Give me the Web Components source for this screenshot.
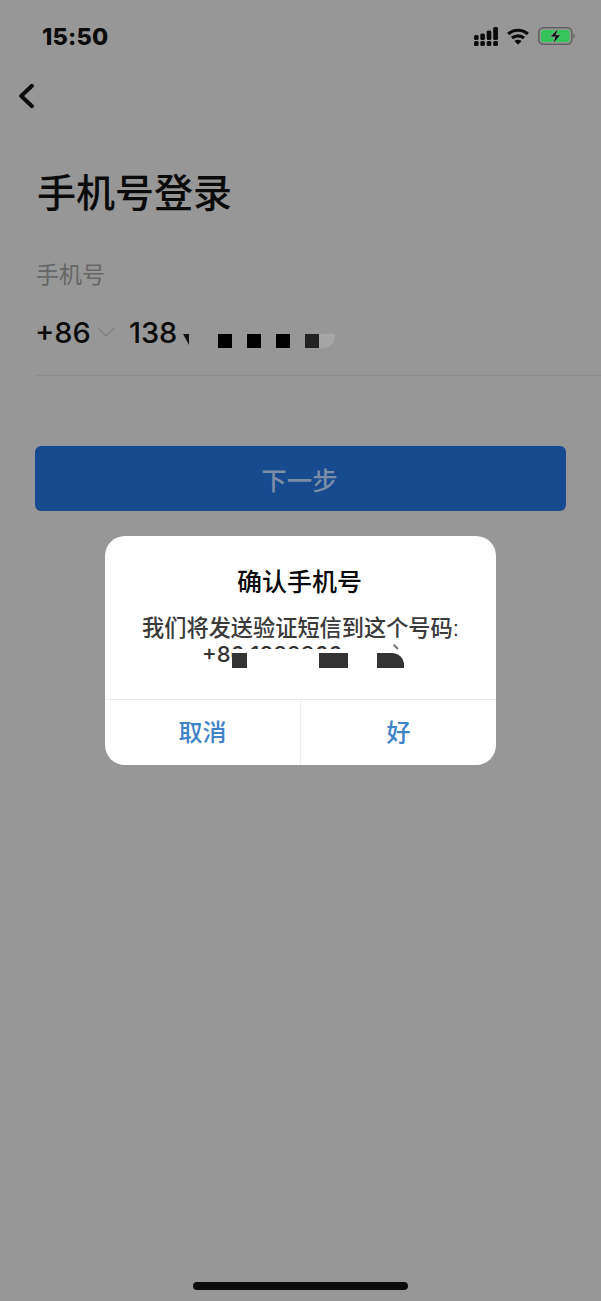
<!DOCTYPE html>
<html lang="zh">
<head>
<meta charset="utf-8">
<title>手机号登录</title>
<style>
  html, body { margin: 0; padding: 0; }
  body {
    width: 601px;
    height: 1301px;
    overflow: hidden;
    background: #979797;
    font-family: "Liberation Sans", "Noto Sans CJK SC", sans-serif;
  }
  phone-screen { height: 1301px; }
</style>
</head>
<body>
<phone-screen>
  <status-bar time="15:50"></status-bar>
  <back-nav></back-nav>
  <login-form>
    <span slot="title">手机号登录</span>
    <span slot="label">手机号</span>
    <span slot="code">+86</span>
    <span slot="number">138</span>
    <span slot="action">下一步</span>
  </login-form>
  <confirm-dialog>
    <span slot="title">确认手机号</span>
    <span slot="message">我们将发送验证短信到这个号码:</span>
    <span slot="phone">+86 1882966</span>
    <span slot="cancel">取消</span>
    <span slot="ok">好</span>
  </confirm-dialog>
  <home-indicator></home-indicator>
</phone-screen>

<script>
class PhoneScreen extends HTMLElement {
  constructor() {
    super();
    this.shadow = this.attachShadow({ mode: 'open' });
    this.shadow.innerHTML = `
      <style>
        :host { display: flex; flex-direction: column; position: relative; width: 601px; }
        ::slotted(home-indicator) { margin-top: auto; }
      </style>
      <slot></slot>`;
  }
}

class StatusBar extends HTMLElement {
  constructor() {
    super();
    this.shadow = this.attachShadow({ mode: 'open' });
    this.shadow.innerHTML = `
      <style>
        :host {
          display: flex; align-items: center; justify-content: space-between;
          height: 72px; padding: 0 26px 0 42px; box-sizing: border-box;
        }
        .time { font: 800 23.500px/1 "Inter", "Liberation Sans", sans-serif; color: #0b0b0b; letter-spacing: .2px; margin-top: 1px; }
        .icons { display: flex; align-items: center; gap: 9px; }
        svg { display: block; }
      </style>
      <span class="time">${this.getAttribute('time')}</span>
      <div class="icons">
        <svg width="24" height="19" viewBox="0 0 24 19" fill="#0b0b0b">
          <rect x="0" y="8" width="4.600" height="5" rx="1.500"/><rect x="0" y="14" width="4.600" height="5" rx="1.500"/>
          <rect x="6.300" y="6.500" width="4.600" height="6.500" rx="1.500"/><rect x="6.300" y="14" width="4.600" height="5" rx="1.500"/>
          <rect x="12.700" y="3.500" width="4.600" height="9.500" rx="1.500"/><rect x="12.700" y="14" width="4.600" height="5" rx="1.500"/>
          <rect x="19.200" y="0" width="4.800" height="13" rx="1.500"/><rect x="19.200" y="14" width="4.800" height="5" rx="1.500"/>
        </svg>
        <svg width="22" height="17" viewBox="0 0 22 17" fill="none" stroke="#0b0b0b" stroke-width="3.200">
          <path d="M1.200 6C6.800 1 15.200 1 20.800 6"/>
          <path d="M5 10C8.400 7.100 13.600 7.100 17 10"/>
          <path d="M11 16.800l-3.600-3.800c2.100-1.600 5.100-1.600 7.200 0z" fill="#0b0b0b" stroke="none"/>
        </svg>
        <svg width="37" height="18" viewBox="0 0 37 18">
          <rect x=".8" y=".8" width="33" height="16.400" rx="4.500" fill="none" stroke="#5f625f" stroke-width="1.600"/>
          <rect x="3" y="3" width="28.600" height="12" rx="2.500" fill="#34c45c"/>
          <path d="M35.500 6.500v5c.9-.4 1.300-1.400 1.300-2.500s-.4-2.100-1.300-2.500z" fill="#5f625f"/>
          <path d="M20.800 .5L11.500 10.300h5L14 17.500l9-10h-5z" fill="#979797"/>
          <path d="M19.700 2.500L13 9.600h4.700L15.500 15.500l6.500-7.300h-4.700z" fill="#0b0b0b"/>
        </svg>
      </div>`;
  }
}

class BackNav extends HTMLElement {
  constructor() {
    super();
    this.shadow = this.attachShadow({ mode: 'open' });
    this.shadow.innerHTML = `
      <style>
        :host { display: block; height: 48px; padding-left: 18px; }
        svg { display: block; margin-top: 11px; }
      </style>
      <svg width="17" height="26" viewBox="0 0 17 26" fill="none" stroke="#0b0b0b" stroke-width="4" stroke-linecap="round" stroke-linejoin="round">
        <path d="M14 2.800L3.200 13L14 23.200"/>
      </svg>`;
  }
}

class LoginForm extends HTMLElement {
  constructor() {
    super();
    this.shadow = this.attachShadow({ mode: 'open' });
    this.shadow.innerHTML = `
      <style>
        :host { display: block; padding: 49px 0 0 36px; }
        .title { font-size: 39px; line-height: 50px; font-weight: 500; color: #0a0a0a; margin-left: 1px; }
        .label { font-size: 23px; line-height: 30px; color: #666; margin: 41px 0 0 0; }
        .row {
          display: flex; align-items: center; height: 86px;
          border-bottom: 1px solid #8d8d8d; box-sizing: border-box;
          font: 500 29px/1 "Inter", "Liberation Sans", sans-serif; color: #0a0a0a; position: relative;
        }
        .code { margin-left: -1px; }
        .chev { margin: 0 14px 0 6px; display: block; }
        .mask { position: absolute; bottom: 27px; height: 14px; width: 14px; background: #000; }
        .wedge { position: absolute; left: 147px; bottom: 30px; width: 6px; height: 11px; background: #111; clip-path: polygon(0 0, 100% 0, 100% 100%); }
        .m4 { background: #222; }
        .m5 { background: #a6a6a6; width: 16px; border-bottom-right-radius: 12px; }
        button {
          display: block; width: 531px; height: 65px; margin: 70px 0 0 -1px; padding: 0 2px 0 0;
          border: 0; border-radius: 6px; background: #174a8f; color: #7c8ea7;
          font: 500 25.500px/65px "Noto Sans CJK SC", sans-serif;
        }
      </style>
      <div class="title"><slot name="title"></slot></div>
      <div class="label"><slot name="label"></slot></div>
      <div class="row">
        <span class="code"><slot name="code"></slot></span>
        <svg class="chev" width="18" height="11" viewBox="0 0 18 11" fill="none" stroke="#7f7f7f" stroke-width="1.300"><path d="M1 1l8 8 8-8"/></svg>
        <slot name="number"></slot>
        <i class="wedge"></i>
        <i class="mask" style="left:182px"></i>
        <i class="mask" style="left:211px"></i>
        <i class="mask" style="left:240px"></i>
        <i class="mask m4" style="left:269px"></i>
        <i class="mask m5" style="left:283px"></i>
      </div>
      <button><slot name="action"></slot></button>`;
  }
}

class ConfirmDialog extends HTMLElement {
  constructor() {
    super();
    this.shadow = this.attachShadow({ mode: 'open' });
    this.shadow.innerHTML = `
      <style>
        :host {
          position: absolute; left: 105px; top: 536px; width: 391px; height: 229px;
          display: flex; flex-direction: column;
          background: #fff; border-radius: 20px; overflow: hidden;
        }
        .body { flex: 1; display: flex; flex-direction: column; align-items: center; padding-top: 28px; position: relative; }
        .title { font-size: 25px; line-height: 36px; font-weight: 500; color: #080808; padding-right: 2px; }
        .message { font-size: 22.200px; line-height: 33px; font-weight: 500; color: #3a3a3a; margin-top: 12px; white-space: nowrap; }
        .phone { font: 500 22px/26px "Inter", "Liberation Sans", sans-serif; color: #333; margin-top: -4px; white-space: nowrap; align-self: flex-start; padding-left: 97px; }
        .cover { position: absolute; left: 127px; top: 113px; width: 200px; height: 24px; background: #fff; }
        .block { position: absolute; top: 117px; height: 15px; background: #333; }
        .tick { position: absolute; left: 288px; top: 110px; width: 6px; height: 1.500px; background: #777; transform: rotate(45deg); }
        .actions { display: flex; height: 66px; border-top: 1px solid #e8e8e8; box-sizing: border-box; }
        .action {
          display: flex; align-items: center; justify-content: center; padding-bottom: 4px;
          font-size: 24px; font-weight: 500; color: #3f82c6;
        }
        .action:first-child { flex: 0 0 195px; }
        .action + .action { flex: 1; border-left: 1px solid #efefef; }
      </style>
      <div class="body">
        <div class="title"><slot name="title"></slot></div>
        <div class="message"><slot name="message"></slot></div>
        <div class="phone"><slot name="phone"></slot></div>
        <i class="cover"></i>
        <i class="tick"></i>
        <i class="block" style="left:127px;width:15px"></i>
        <i class="block" style="left:214px;width:29px"></i>
        <i class="block" style="left:272px;width:27px;border-top-right-radius:12px"></i>
      </div>
      <div class="actions">
        <div class="action"><slot name="cancel"></slot></div>
        <div class="action"><slot name="ok"></slot></div>
      </div>`;
  }
}

class HomeIndicator extends HTMLElement {
  constructor() {
    super();
    this.shadow = this.attachShadow({ mode: 'open' });
    this.shadow.innerHTML = `
      <style>
        :host { display: flex; justify-content: center; padding-bottom: 11px; }
        div { width: 215px; height: 8px; border-radius: 4px; background: #0b0b0b; }
      </style>
      <div></div>`;
  }
}

customElements.define('phone-screen', PhoneScreen);
customElements.define('status-bar', StatusBar);
customElements.define('back-nav', BackNav);
customElements.define('login-form', LoginForm);
customElements.define('confirm-dialog', ConfirmDialog);
customElements.define('home-indicator', HomeIndicator);
</script>
</body>
</html>
